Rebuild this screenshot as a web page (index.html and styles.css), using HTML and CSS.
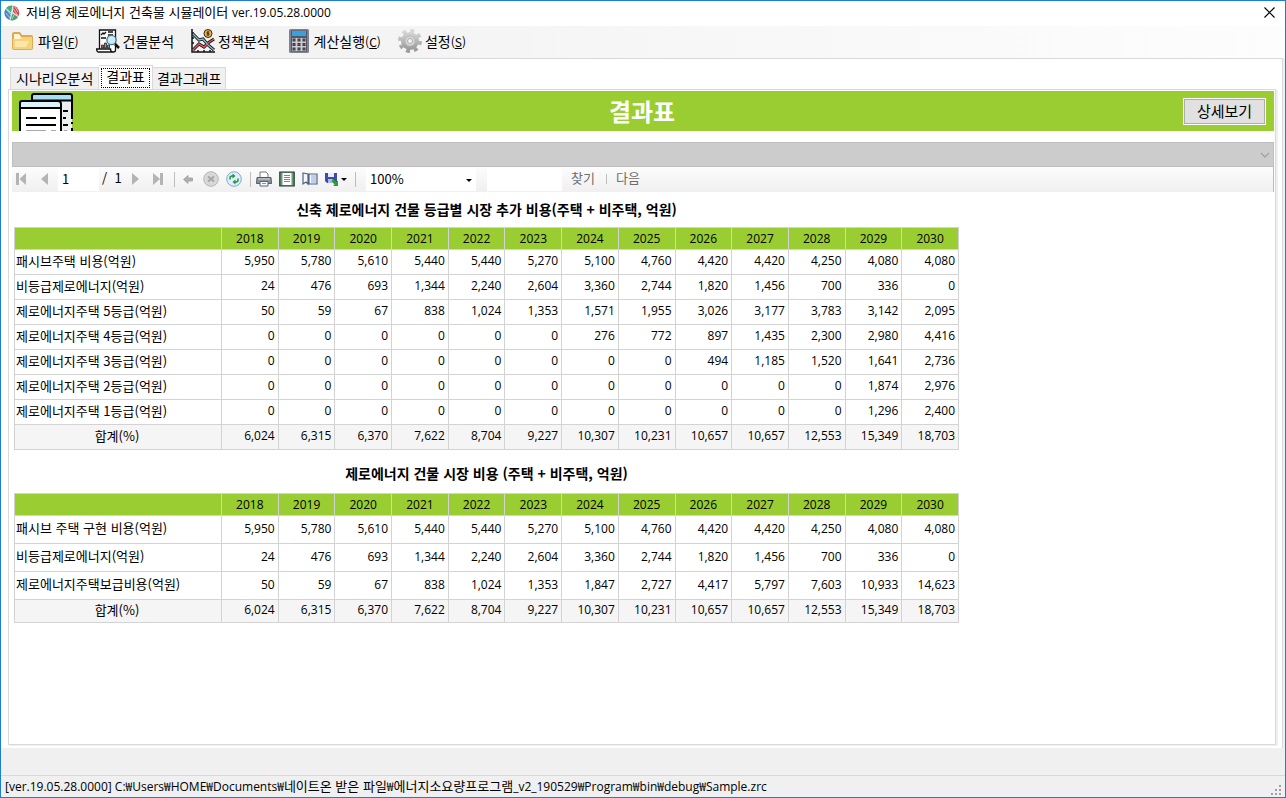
FILE: index.html
```html
<!DOCTYPE html>
<html lang="ko">
<head>
<meta charset="utf-8">
<title>저비용 제로에너지 건축물 시뮬레이터</title>
<link rel="stylesheet" href="styles.css">
</head>
<body>
<div class="window">
  <header class="titlebar">
    <svg class="app-icon" width="16" height="16" viewBox="0 0 16 16"><circle cx="8" cy="8" r="7.500" fill="#dfe6ea"/><path d="M7 7.500L2 3A7.500 7.500 0 0 1 8.500.6z" fill="#43b277"/><path d="M9 7L9.600.7A7.500 7.500 0 0 1 14.500 11z" fill="#d2474f"/><path d="M8.500 8.500l5.500 3.500A7.500 7.500 0 0 1 6.500 15.300z" fill="#4ea06c"/><path d="M7 8.500L1.500 4A7.500 7.500 0 0 0 5.500 15z" fill="#4a86c4"/><path d="M2 8l4 5M3 5l4 5M11 2l3 5M9.500 4l4 6M10 10l-2 4" stroke="#f4f8fa" stroke-width=".6"/></svg>
    <h1 class="title">저비용 제로에너지 건축물 시뮬레이터 <span class="latin">ver.19.05.28.0000</span></h1>
    <button class="close" aria-label="닫기"><svg width="11" height="11" viewBox="0 0 11 11"><path d="M.5.5l10 10M10.500.5l-10 10" stroke="#000" stroke-width="1.200"/></svg></button>
  </header>

  <nav class="menubar">
    <button class="menu-item"><svg width="24" height="24" viewBox="0 0 24 24"><path d="M1 5q0-2 2-2h6l2 3h9q2 0 2 2v11q0 2-2 2H3q-2 0-2-2z" fill="#e0a850"/><path d="M3 5h5l2 3h10v8H3z" fill="#fff6d8"/><path d="M2 10h7l2-2h10v11q0 1-1 1H3q-1 0-1-1z" fill="#f5d37b"/><path d="M4 12h14l-3 6H4z" fill="#fbe7a8"/></svg><span>파일<small>(<u>F</u>)</small></span></button>
    <button class="menu-item"><svg width="24" height="24" viewBox="0 0 24 24" fill="none" stroke="#111" stroke-width="1.300"><path d="M3.500 20V1h16v20q0 2-2 2H2q-1.500-1-1.500-3h14q0 3 2.500 3" fill="#fff"/><path d="M5 6l2-2 1 1 2-2M12 3h5M12 6h5M5 9h5"/><path d="M5.500 19v-3h2v3z" fill="#d64c55" stroke-width=".7"/><path d="M8.500 19v-5h2v5z" fill="#61b66e" stroke-width=".7"/><path d="M11.500 19v-3h2v3z" fill="#4f9fd0" stroke-width=".7"/><path d="M19 15l4 4" stroke-width="2.500"/><circle cx="15.500" cy="11" r="4.600" fill="#c9ecfa" stroke="#4d7486"/></svg><span>건물분석</span></button>
    <button class="menu-item"><svg width="24" height="24" viewBox="0 0 24 24" fill="none"><path d="M1 0v23h23M1 4h2M1 9h2M1 14h2M7 23v-2M13 23v-2M19 23v-2" stroke="#111" stroke-width="1.500"/><path d="M2 5l6 6 4-1 5 6 6 5M2 21l6-6 5 3 4-4 6-4" stroke="#111" stroke-width="3"/><path d="M2 5l6 6 4-1 5 6 6 5" stroke="#79bdd4" stroke-width="1.400"/><path d="M2 21l6-6 5 3 4-4 6-4" stroke="#e05a67" stroke-width="1.400"/><circle cx="17" cy="4.500" r="4" fill="#edb64e" stroke="#38240b"/><path d="M18.500 3h-2.500v1.500h2V6h-2.500M17 2v5" stroke="#38240b" stroke-width=".8"/></svg><span>정책분석</span></button>
    <button class="menu-item"><svg width="24" height="24" viewBox="0 0 24 24"><rect x="2" width="20" height="24" rx="1.500" fill="#7c8494"/><rect x="4" y="1.500" width="16" height="21" fill="#50586a"/><rect x="5" y="2" width="14" height="5" fill="#3ba0dc"/><path d="M5 9h14v13H5z" fill="#c9cdda"/><g fill="#3b3838"><path d="M5.500 9.500h3v3h-3zM10.500 9.500h3v3h-3zM15.500 9.500h3v3h-3zM5.500 14h3v3h-3zM10.500 14h3v3h-3zM15.500 14h3v3h-3zM5.500 18.500h3v3h-3zM10.500 18.500h3v3h-3zM15.500 18.500h3v3h-3z"/></g><g fill="#a06336"><path d="M6.500 10.500h1v1h-1zM11.500 10.500h1v1h-1zM16.500 10.500h1v1h-1zM6.500 15h1v1h-1zM11.500 15h1v1h-1zM16.500 15h1v1h-1zM6.500 19.500h1v1h-1zM11.500 19.500h1v1h-1zM16.500 19.500h1v1h-1z"/></g></svg><span>계산실행<small>(<u>C</u>)</small></span></button>
    <button class="menu-item"><svg width="24" height="24" viewBox="0 0 24 24"><defs><linearGradient id="gear" x2="0" y2="1"><stop stop-color="#d6d6d6"/><stop offset="1" stop-color="#999"/></linearGradient></defs><circle cx="12" cy="12" r="10" fill="none" stroke="url(#gear)" stroke-width="4" stroke-dasharray="3.800 4.054"/><circle cx="12" cy="12" r="9" fill="url(#gear)"/><circle cx="12" cy="12" r="5" fill="#d8d8d8" stroke="#bbb"/><circle cx="12" cy="12" r="2.500" fill="#f4f4f4" stroke="#aaa"/></svg><span>설정<small>(<u>S</u>)</small></span></button>
  </nav>

  <main class="workspace">
    <div class="tabs" role="tablist">
      <button class="tab" role="tab">시나리오분석</button>
      <button class="tab tab-active" role="tab" aria-selected="true"><span>결과표</span></button>
      <button class="tab" role="tab">결과그래프</button>
    </div>
    <section class="page">
      <div class="banner">
        <svg class="banner-icon" width="56" height="39" viewBox="0 0 56 39"><path d="M14 9V4q0-2 2-2h36q2 0 2 2v35H42V9z" fill="#eceef1"/><path d="M14 9V4q0-2 2-2h36q2 0 2 2v4.500z" fill="#a9dff5"/><path d="M14 9V4q0-2 2-2h36q2 0 2 2v23M54 30v2M54 36v3M14 8.500h40" fill="none" stroke="#000" stroke-width="2"/><path d="M2 39V11q0-2 2-2h36q3 0 3 3v27z" fill="#fff"/><path d="M2 16v-5q0-2 2-2h36q3 0 3 3v4z" fill="#d9f2fc"/><path d="M2 39V11q0-2 2-2h36q3 0 3 3v27M2 16h41" fill="none" stroke="#000" stroke-width="2"/><path d="M8 26h11M22 26h16M8 33h30M45 19h5M45 26h3M45 33h5" stroke="#000" stroke-width="2"/><path d="M8 38.500h20M33 38.500h5M46 38.500h3" stroke="#aaa"/></svg>
        <h2 class="banner-title">결과표</h2>
        <button class="detail">상세보기</button>
      </div>

      <div class="param">
        <select class="param-select" aria-label="매개 변수" disabled><option></option></select>
        <svg class="param-arrow" width="10" height="6" viewBox="0 0 10 6"><path d="M1 1l4 4 4-4" fill="none" stroke="#a3a3a3" stroke-width="1.300"/></svg>
      </div>

      <div class="report-bar">
        <button class="tool" aria-label="첫 페이지"><svg width="16" height="16" viewBox="0 0 16 16" fill="#b4b4b4"><path d="M2 2h3v12H2zM12 2v12L5.500 8z"/></svg></button>
        <button class="tool" aria-label="이전 페이지"><svg width="16" height="16" viewBox="0 0 16 16" fill="#b4b4b4"><path d="M11 2v12L4 8z"/></svg></button>
        <input class="page-input" aria-label="현재 페이지" value="1">
        <span class="page-total">/&nbsp; 1</span>
        <button class="tool" aria-label="다음 페이지"><svg width="16" height="16" viewBox="0 0 16 16" fill="#b4b4b4"><path d="M5 2v12l7-6z"/></svg></button>
        <button class="tool" aria-label="마지막 페이지"><svg width="16" height="16" viewBox="0 0 16 16" fill="#b4b4b4"><path d="M10 2h3v12h-3zM3 2v12l7-6z"/></svg></button>
        <i class="sep"></i>
        <button class="tool" aria-label="뒤로"><svg width="16" height="16" viewBox="0 0 16 16"><path d="M3.500 8.500L8 4.500v2.500h4.500v3H8v2.500z" fill="#b0b0b0" stroke="#999" stroke-width=".7"/></svg></button>
        <button class="tool" aria-label="중지"><svg width="16" height="16" viewBox="0 0 16 16"><circle cx="8" cy="8" r="7.300" fill="#d8d8d8" stroke="#b5b5b5"/><path d="M5 5.500l6 5M11 5.500l-6 5" stroke="#a8a8a8" stroke-width="2.200"/></svg></button>
        <button class="tool" aria-label="새로 고침"><svg width="16" height="16" viewBox="0 0 16 16"><circle cx="8" cy="8" r="7.300" fill="#e0effa" stroke="#7fa9d4"/><path d="M4 8.500V7q0-2 2-2h1M12 7.500V9q0 2-2 2H9" fill="none" stroke="#219443" stroke-width="1.500"/><path d="M6.500 2.500l3 2.500-3 2.500zM9.500 8.500l-3 2.500 3 2.500z" fill="#219443"/></svg></button>
        <i class="sep"></i>
        <button class="tool" aria-label="인쇄"><svg width="16" height="16" viewBox="0 0 16 16"><path d="M4 7V1h6l2 2v4" fill="#fff" stroke="#777"/><path d="M1 6.500h14l.5 6H.5z" fill="#8d929a" stroke="#555c66"/><path d="M2 8h12" stroke="#d5d8dc"/><path d="M4 10.500h8v4.500H4z" fill="#f5faff" stroke="#5c6774"/><path d="M6 12.500h4" stroke="#5b9fd4"/></svg></button>
        <button class="tool" aria-label="인쇄 모양"><svg width="16" height="16" viewBox="0 0 16 16"><path d="M.8 1h14.400v14H.8z" fill="#6c9a76" stroke="#1f3d38" stroke-width="1.200"/><path d="M3.500 2h9v12h-9z" fill="#fff"/><path d="M5 4.500h6M5 6.500h6M5 8.500h6M5 10.500h6" stroke="#7087a0"/></svg></button>
        <button class="tool" aria-label="페이지 설정"><svg width="16" height="16" viewBox="0 0 16 16"><path d="M1 2l5 1v10l-2-2-3 2zM7 3h8v10H7z" fill="#f6f9ff" stroke="#52617e" stroke-width="1.200"/><path d="M9 4h5v8H9z" fill="#bdd0ec"/></svg></button>
        <button class="tool tool-save" aria-label="내보내기"><svg width="24" height="16" viewBox="0 0 24 16"><path d="M1 2h12v10H3l-2-2z" fill="#3c4da6"/><path d="M4 2h6v4H4z" fill="#e8ecfa"/><path d="M4 8h5v4H4z" fill="#aeb9e4"/><path d="M9 8l3.500 3 1.500-1.500V15H9l1.500-1.500L7.500 10z" fill="#28a035"/><path d="M17 7h6l-3 3z" fill="#000"/></svg></button>
        <i class="sep"></i>
        <div class="zoom">
          <select class="zoom-select" aria-label="확대/축소"><option>100%</option></select>
          <svg class="zoom-arrow" width="6" height="3" viewBox="0 0 6 3"><path d="M0 0h6L3 3z"/></svg>
        </div>
        <input class="find-input" aria-label="찾을 텍스트">
        <button class="find-button">찾기</button>
        <i class="sep sep-short"></i>
        <button class="find-button">다음</button>
      </div>

      <div class="report">
        <table class="grid">
          <caption>신축 제로에너지 건물 등급별 시장 추가 비용(주택 + 비주택, 억원)</caption>
          <colgroup><col class="col-name"><col span="13"></colgroup>
          <thead><tr><th></th><th>2018</th><th>2019</th><th>2020</th><th>2021</th><th>2022</th><th>2023</th><th>2024</th><th>2025</th><th>2026</th><th>2027</th><th>2028</th><th>2029</th><th>2030</th></tr></thead>
          <tbody>
            <tr><th>패시브주택 비용(억원)</th><td>5,950</td><td>5,780</td><td>5,610</td><td>5,440</td><td>5,440</td><td>5,270</td><td>5,100</td><td>4,760</td><td>4,420</td><td>4,420</td><td>4,250</td><td>4,080</td><td>4,080</td></tr>
            <tr><th>비등급제로에너지(억원)</th><td>24</td><td>476</td><td>693</td><td>1,344</td><td>2,240</td><td>2,604</td><td>3,360</td><td>2,744</td><td>1,820</td><td>1,456</td><td>700</td><td>336</td><td>0</td></tr>
            <tr><th>제로에너지주택 5등급(억원)</th><td>50</td><td>59</td><td>67</td><td>838</td><td>1,024</td><td>1,353</td><td>1,571</td><td>1,955</td><td>3,026</td><td>3,177</td><td>3,783</td><td>3,142</td><td>2,095</td></tr>
            <tr><th>제로에너지주택 4등급(억원)</th><td>0</td><td>0</td><td>0</td><td>0</td><td>0</td><td>0</td><td>276</td><td>772</td><td>897</td><td>1,435</td><td>2,300</td><td>2,980</td><td>4,416</td></tr>
            <tr><th>제로에너지주택 3등급(억원)</th><td>0</td><td>0</td><td>0</td><td>0</td><td>0</td><td>0</td><td>0</td><td>0</td><td>494</td><td>1,185</td><td>1,520</td><td>1,641</td><td>2,736</td></tr>
            <tr><th>제로에너지주택 2등급(억원)</th><td>0</td><td>0</td><td>0</td><td>0</td><td>0</td><td>0</td><td>0</td><td>0</td><td>0</td><td>0</td><td>0</td><td>1,874</td><td>2,976</td></tr>
            <tr><th>제로에너지주택 1등급(억원)</th><td>0</td><td>0</td><td>0</td><td>0</td><td>0</td><td>0</td><td>0</td><td>0</td><td>0</td><td>0</td><td>0</td><td>1,296</td><td>2,400</td></tr>
          </tbody>
          <tfoot><tr><th>합계(%)</th><td>6,024</td><td>6,315</td><td>6,370</td><td>7,622</td><td>8,704</td><td>9,227</td><td>10,307</td><td>10,231</td><td>10,657</td><td>10,657</td><td>12,553</td><td>15,349</td><td>18,703</td></tr></tfoot>
        </table>

        <table class="grid grid-tall">
          <caption>제로에너지 건물 시장 비용 (주택 + 비주택, 억원)</caption>
          <colgroup><col class="col-name"><col span="13"></colgroup>
          <thead><tr><th></th><th>2018</th><th>2019</th><th>2020</th><th>2021</th><th>2022</th><th>2023</th><th>2024</th><th>2025</th><th>2026</th><th>2027</th><th>2028</th><th>2029</th><th>2030</th></tr></thead>
          <tbody>
            <tr><th>패시브 주택 구현 비용(억원)</th><td>5,950</td><td>5,780</td><td>5,610</td><td>5,440</td><td>5,440</td><td>5,270</td><td>5,100</td><td>4,760</td><td>4,420</td><td>4,420</td><td>4,250</td><td>4,080</td><td>4,080</td></tr>
            <tr><th>비등급제로에너지(억원)</th><td>24</td><td>476</td><td>693</td><td>1,344</td><td>2,240</td><td>2,604</td><td>3,360</td><td>2,744</td><td>1,820</td><td>1,456</td><td>700</td><td>336</td><td>0</td></tr>
            <tr><th>제로에너지주택보급비용(억원)</th><td>50</td><td>59</td><td>67</td><td>838</td><td>1,024</td><td>1,353</td><td>1,847</td><td>2,727</td><td>4,417</td><td>5,797</td><td>7,603</td><td>10,933</td><td>14,623</td></tr>
          </tbody>
          <tfoot><tr><th>합계(%)</th><td>6,024</td><td>6,315</td><td>6,370</td><td>7,622</td><td>8,704</td><td>9,227</td><td>10,307</td><td>10,231</td><td>10,657</td><td>10,657</td><td>12,553</td><td>15,349</td><td>18,703</td></tr></tfoot>
        </table>
      </div>
    </section>
  </main>

  <footer class="status">
    <span><span class="latin">[ver.19.05.28.0000] C:₩Users₩HOME₩Documents₩</span>네이트온 받은 파일<span class="latin">₩</span>에너지소요량프로그램<span class="latin">_v2_190529₩Program₩bin₩debug₩Sample.zrc</span></span>
    <svg class="grip" width="11" height="11" viewBox="0 0 11 11" fill="#a0a0a0"><path d="M8 0h2v2H8zM4 4h2v2H4zM8 4h2v2H8zM0 8h2v2H0zM4 8h2v2H4zM8 8h2v2H8z"/></svg>
  </footer>
</div>
</body>
</html>
```
FILE: styles.css
```css
* { box-sizing: border-box; }
body {
  margin: 0;
  font: 13px/18px "Noto Sans CJK KR", sans-serif;
  color: #000;
}
button, input, select {
  margin: 0;
  padding: 0;
  border: 0;
  border-radius: 0;
  background: none;
  font: inherit;
  color: inherit;
  appearance: none;
}
svg { display: block; flex: none; }
.latin {
  font-family: "Open Sans", "Noto Sans CJK KR", sans-serif;
  font-size: 12px;
}
.window {
  display: flex;
  flex-direction: column;
  min-height: 100vh;
  border: 1px solid #1a7fd4;
  background: #f0f0f0;
}

.titlebar {
  display: flex;
  align-items: center;
  height: 25px;
  padding: 0 10px 2px 3px;
  background: #fff;
}
.title {
  flex: 1;
  margin: 0 0 0 6px;
  font-size: 13px;
  font-weight: 400;
}

.menubar {
  display: flex;
  align-items: center;
  gap: 17px;
  height: 32px;
  padding: 0 10px 2px;
  background: linear-gradient(90deg, #f0f0f0, #fdfdfd);
}
.menu-item {
  display: flex;
  align-items: center;
  gap: 3px;
  font-size: 14px;
  white-space: nowrap;
}
.menu-item small { font-size: 12px; }

.workspace {
  flex: 1;
  display: flex;
  flex-direction: column;
  margin: 0 2px 27px 0;
  padding: 7px 6px 3px 7px;
  border: 1px solid #d9d9d9;
  border-width: 1px 1px 0 0;
  background: #fff;
}
.tabs {
  display: flex;
  align-items: flex-end;
  height: 23px;
  padding-left: 2px;
}
.tab {
  height: 22px;
  padding: 0 5px 2px;
  border: 1px solid #d9d9d9;
  border-bottom: 0;
  background: #f0f0f0;
  font-size: 14px;
  line-height: 18px;
}
.tab + .tab { border-left: 0; padding: 0 4px 2px; }
.tab + .tab-active {
  height: 24px;
  padding: 2px 2px 1px;
  background: #fff;
}
.tab-active span {
  display: block;
  height: 20px;
  padding: 0 4px;
  border: 1px dotted #000;
  line-height: 14px;
}
.page {
  flex: 1;
  padding: 1px 1px 0 3px;
  border: 1px solid #d9d9d9;
  box-shadow: 2px 1px #f0f0f0;
}

.banner {
  display: grid;
  grid-template-columns: 1fr auto 1fr;
  align-items: center;
  height: 40px;
  margin-bottom: 11px;
  padding: 0 8px 0 6px;
  background: #9acd32;
}
.banner-icon { align-self: end; }
.banner-title {
  margin: 0;
  color: #fff;
  font-size: 24px;
  line-height: 32px;
}
.detail {
  justify-self: end;
  width: 83px;
  height: 27px;
  border: 1px solid #fff;
  outline: 1px solid #adadad;
  outline-offset: -2px;
  background: #e1e1e1;
  font-size: 15px;
}

.param { position: relative; }
.param-select {
  display: block;
  width: 100%;
  height: 25px;
  border: 1px solid #bfbfbf;
  background: #ccc;
  opacity: 1;
}
.param-arrow {
  position: absolute;
  top: 10px;
  right: 4px;
}

.report-bar {
  display: flex;
  align-items: center;
  gap: 3px;
  height: 25px;
  padding-bottom: 1px;
  border-right: 1px solid #bbb;
  background: linear-gradient(#fcfcfc, #f0f0f0);
}
.tool {
  display: flex;
  align-items: center;
  justify-content: center;
  width: 20px;
  height: 22px;
}
.tool-save { width: 26px; }
.page-input {
  width: 41px;
  height: 23px;
  padding: 0 4px 2px;
  background: #fff;
}
.page-total {
  width: 20px;
  padding-bottom: 2px;
}
.sep {
  width: 4px;
  height: 15px;
  border-right: 1px solid #bdbdbd;
}
.sep-short { height: 10px; }
.zoom {
  position: relative;
  margin-left: 7px;
}
.zoom-select {
  display: block;
  width: 110px;
  height: 23px;
  padding: 0 4px;
  background: #fff;
}
.zoom-arrow {
  position: absolute;
  top: 11px;
  right: 4px;
}
.find-input {
  width: 75px;
  height: 23px;
  margin-left: 8px;
  background: #fff;
}
.find-button {
  padding: 0 5px 2px 6px;
  color: #6d6d6d;
}

.report { padding-left: 2px; }
.grid {
  width: 945px;
  table-layout: fixed;
  border-collapse: collapse;
}
.grid caption {
  padding: 8px 0 9px;
  font-size: 14px;
  font-weight: 700;
}
.col-name { width: 207px; }
.grid th, .grid td {
  height: 25px;
  padding: 0 3px 3px 1px;
  border: 1px solid #d3d3d3;
  font-weight: 400;
  text-align: right;
  white-space: nowrap;
}
.grid td, .grid thead th {
  padding-bottom: 2px;
  font-family: "Open Sans", sans-serif;
  font-size: 12px;
}
.grid tbody th { text-align: left; }
.grid thead th {
  height: 22px;
  padding: 0 1px;
  background: #9acd32;
  text-align: center;
}
.grid tfoot th, .grid tfoot td { background: #f5f5f5; }
.grid tfoot th { text-align: center; }
.grid-tall caption { padding: 14px 0 11px; }
.grid-tall tbody th, .grid-tall tbody td { height: 28px; }
.grid-tall tfoot th, .grid-tall tfoot td { height: 23px; }

.status {
  display: flex;
  align-items: center;
  justify-content: space-between;
  height: 22px;
  padding: 0 3px 1px 4px;
  border-top: 1px solid #d9d9d9;
}
.grip { align-self: flex-end; }
```
